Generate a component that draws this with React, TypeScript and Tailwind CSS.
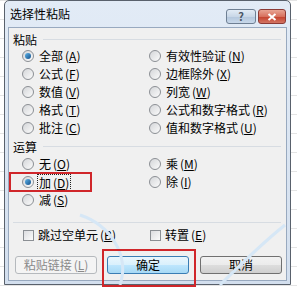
const Radio = ({ checked = false }: { checked?: boolean }) => (
  <span className="w-[12px] h-[12px] rounded-full border border-[#8b8f94] bg-gradient-to-br from-[#d4d6d9] to-[#fbfbfb] flex items-center justify-center shrink-0">
    {checked && (
      <span className="w-[6px] h-[6px] rounded-full bg-gradient-to-br from-[#5fb5ea] to-[#14508a]" />
    )}
  </span>
);

const Check = () => (
  <span className="ml-[1px] w-[11px] h-[11px] border border-[#8b8f94] bg-gradient-to-br from-[#dcdde0] to-[#fbfbfb] shrink-0" />
);

const Key = ({ k }: { k: string }) => (
  <span className="ml-[2px]">
    (<span className="underline underline-offset-[1px]">{k}</span>)
  </span>
);

const Option = ({
  label,
  k,
  checked,
  focus,
}: {
  label: string;
  k: string;
  checked?: boolean;
  focus?: boolean;
}) => (
  <div className="h-[18px] flex items-center gap-[5px]">
    <Radio checked={checked} />
    <span className={focus ? "outline outline-1 outline-dotted outline-[#222] outline-offset-[1px] leading-[13px]" : ""}>
      {label}
      <Key k={k} />
    </span>
  </div>
);

const Header = ({ text }: { text: string }) => (
  <div className="h-[14px] flex items-center gap-[6px] pl-[4px] pr-[5px]">
    <span>{text}</span>
    <span className="flex-1 h-[2px] border-t border-[#d7dce2] border-b-white" />
  </div>
);

const Button = ({
  children,
  disabled,
  primary,
}: {
  children: React.ReactNode;
  disabled?: boolean;
  primary?: boolean;
}) => (
  <div
    className={
      "w-[82px] h-[18px] rounded-[3px] border flex items-center justify-center " +
      (disabled
        ? "border-[#b5b9bd] bg-[#f4f4f4] text-[#8a8a8a]"
        : primary
        ? "border-[#3a7db4] bg-[linear-gradient(#eaf6fd_0%,#d9f0fc_50%,#bee6fd_51%,#a7d9f5_100%)] text-black"
        : "border-[#707070] bg-[linear-gradient(#f2f2f2_0%,#ebebeb_50%,#dddddd_51%,#cfcfcf_100%)] text-black")
    }
  >
    {children}
  </div>
);

export default function App() {
  return (
    <div className="relative w-[297px] h-[290px] overflow-hidden bg-white bg-[linear-gradient(#e4e4e4_1px,transparent_1px)] bg-[size:100%_19px] font-['Noto_Sans_CJK_SC',sans-serif] text-[12px] text-black">
      <div className="ml-[4px] w-[287px] h-[285px] flex flex-col rounded-t-[5px] border border-[#59616c] bg-gradient-to-b from-[#e2ebf6] to-[#d3dfee] px-[3px] pb-[3px]">
        <div className="h-[26px] flex justify-between pl-[2px] pr-[1px]">
          <span className="self-center">选择性粘贴</span>
          <div className="flex gap-[2px] pt-[8px]">
            <div className="w-[30px] h-[15px] rounded-[3px] border border-[#6e7f93] bg-[linear-gradient(#e2ebf5_0%,#c9d7e7_50%,#b3c6dc_51%,#c8d8ea_100%)] flex items-center justify-center text-[11px] font-bold text-[#4a5564] leading-none">
              ?
            </div>
            <div className="w-[28px] h-[15px] rounded-[3px] border border-[#8c3a35] bg-[linear-gradient(#e8a493_0%,#d7715e_50%,#c4402b_51%,#d27463_100%)] flex items-center justify-center">
              <svg width="10" height="8" viewBox="0 0 10 8">
                <path d="M1.5 1 L8.5 7 M8.5 1 L1.5 7" stroke="#fff" strokeWidth="2" />
              </svg>
            </div>
          </div>
        </div>
        <div className="flex-1 flex flex-col border border-[#98a9bf] bg-[#f0f0f0]">
          <div className="mt-[5px]">
            <Header text="粘贴" />
          </div>
          <div className="grid grid-cols-[127px_1fr] pl-[13px]">
            <Option label="全部" k="A" checked />
            <Option label="有效性验证" k="N" />
            <Option label="公式" k="F" />
            <Option label="边框除外" k="X" />
            <Option label="数值" k="V" />
            <Option label="列宽" k="W" />
            <Option label="格式" k="T" />
            <Option label="公式和数字格式" k="R" />
            <Option label="批注" k="C" />
            <Option label="值和数字格式" k="U" />
          </div>
          <div className="mt-[3px]">
            <Header text="运算" />
          </div>
          <div className="mt-[1px] grid grid-cols-[127px_1fr] pl-[13px]">
            <Option label="无" k="O" />
            <Option label="乘" k="M" />
            <Option label="加" k="D" checked focus />
            <Option label="除" k="I" />
            <Option label="减" k="S" />
            <div />
          </div>
          <div className="mt-[13px] mx-[4px] mr-[5px] h-[2px] border-t border-[#d7dce2] border-b-white" />
          <div className="mt-[2px] grid grid-cols-[127px_1fr] pl-[13px]">
            <div className="h-[18px] flex items-center gap-[4px]">
              <Check />
              <span>
                跳过空单元
                <Key k="B" />
              </span>
            </div>
            <div className="h-[18px] flex items-center gap-[4px]">
              <Check />
              <span>
                转置
                <Key k="E" />
              </span>
            </div>
          </div>
          <div className="mt-[12px] pl-[6px] flex">
            <Button disabled>
              粘贴链接
              <Key k="L" />
            </Button>
            <div className="ml-[10px]">
              <Button primary>确定</Button>
            </div>
            <div className="ml-[11px]">
              <Button>取消</Button>
            </div>
          </div>
        </div>
      </div>

      <svg className="absolute left-[70px] top-[205px] pointer-events-none" width="220" height="85" viewBox="0 0 220 85">
        <path d="M10 10 C40 20 60 50 50 80" stroke="#d6e7f6" strokeWidth="3" fill="none" />
        <path d="M215 20 C190 40 170 60 150 80" stroke="#d6e7f6" strokeWidth="3" fill="none" />
      </svg>

      <div className="absolute left-[9px] top-[172px] w-[83px] h-[20px] border-2 border-[#d0262a]" />
      <div className="absolute left-[102px] top-[249px] w-[94px] h-[38px] border-2 border-[#d0262a]" />
    </div>
  );
}
